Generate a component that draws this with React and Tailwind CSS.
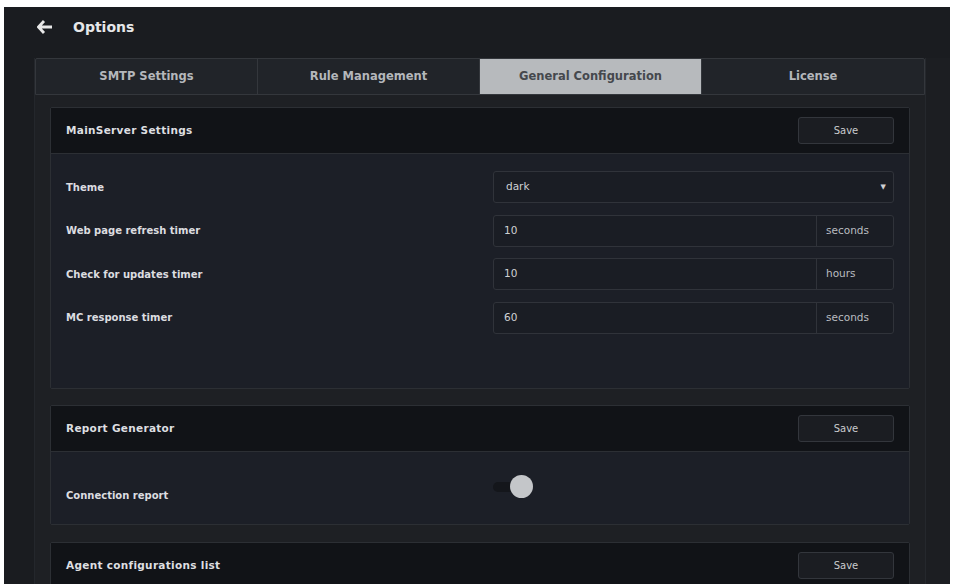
import React, { useState } from 'react';

const tabs = ['SMTP Settings', 'Rule Management', 'General Configuration', 'License'];

const SaveButton = () => (
  <button className="w-[96px] h-[27px] rounded-[3px] border border-[#33363c] bg-[#1b1d22] text-[10px] text-[#c9cbce]">
    Save
  </button>
);

const Card = ({ title, children, bodyClass = '' }) => (
  <div className="border border-[#2c2f34] rounded-[2px]">
    <div className="h-[46px] bg-[#111317] flex items-center justify-between pl-[15px] pr-[15px] border-b border-[#2c2f34]">
      <span className="text-[10.5px] font-bold tracking-[0.3px] text-[#dedfe1]">{title}</span>
      <SaveButton />
    </div>
    {children && <div className={`bg-[#1c1f27] px-[15px] ${bodyClass}`}>{children}</div>}
  </div>
);

const InputRow = ({ label, value, unit }) => (
  <div className="flex items-center h-[32px]">
    <span className="w-[427px] text-[10px] font-bold text-[#dcdde0]">{label}</span>
    <div className="flex-1 flex h-full border border-[#30333a] rounded-[3px] bg-[#1a1d24]">
      <span className="flex-1 flex items-center pl-[10px] text-[10.5px] text-[#cfd1d4] border-r border-[#30333a]">{value}</span>
      <span className="w-[76px] flex items-center pl-[9px] text-[10.5px] text-[#b9bcc0]">{unit}</span>
    </div>
  </div>
);

export default function App() {
  const [active, setActive] = useState(2);
  const [report, setReport] = useState(true);

  return (
    <div className="w-[953px] h-[587px] bg-white pt-[7px] pl-[4px] pr-[3px] pb-[3px] overflow-hidden" style={{ fontFamily: '"DejaVu Sans", "Liberation Sans", sans-serif' }}>
      <div className="h-full bg-[#1a1c20] flex flex-col overflow-hidden">
        {/* top bar */}
        <div className="h-[40px] shrink-0 flex items-center pl-[33px]">
          <svg width="16" height="14" viewBox="0 0 16 14" className="text-[#e8e8e8]">
            <path d="M7 1 L1.5 7 L7 13 M2 7 H15" fill="none" stroke="currentColor" strokeWidth="2.8" strokeLinejoin="miter" />
          </svg>
          <span className="ml-[20px] text-[14px] font-bold text-[#e6e7e9]">Options</span>
        </div>

        <div className="flex-1 flex pt-[11px]">
          <div className="w-[31px] shrink-0 border-r border-[#24272c]" />
          <div className="w-[890px] flex flex-col">
            {/* tabs */}
            <div className="h-[37px] shrink-0 grid grid-cols-4 border border-[#34373c] rounded-t-[2px] bg-[#212429]">
              {tabs.map((t, i) => (
                <button
                  key={t}
                  onClick={() => setActive(i)}
                  className={`text-[11.5px] font-bold ${i < 3 ? 'border-r border-[#34373c]' : ''} ${
                    active === i ? 'bg-[#b7babd] text-[#45484d]' : 'text-[#b4b7bb]'
                  }`}
                >
                  {t}
                </button>
              ))}
            </div>

            {/* panel */}
            <div className="flex-1 bg-[#1e2024] pt-[12px] px-[15px] flex flex-col gap-[17px]">
              <Card title="MainServer Settings" bodyClass="h-[234px] pt-[17px]">
                <div className="flex flex-col gap-[11.5px]">
                  <div className="flex items-center h-[32px]">
                    <span className="w-[427px] text-[10px] font-bold text-[#dcdde0]">Theme</span>
                    <div className="flex-1 h-full flex items-center justify-between border border-[#30333a] rounded-[3px] bg-[#1a1d24] pl-[12px] pr-[7px]">
                      <span className="text-[10.5px] text-[#cfd1d4]">dark</span>
                      <span className="text-[7px] text-[#cfd1d4]">▼</span>
                    </div>
                  </div>
                  <InputRow label="Web page refresh timer" value="10" unit="seconds" />
                  <InputRow label="Check for updates timer" value="10" unit="hours" />
                  <InputRow label="MC response timer" value="60" unit="seconds" />
                </div>
              </Card>

              <div className="-mt-[1px]">
                <Card title="Report Generator" bodyClass="h-[72px] flex items-center">
                  <span className="w-[427px] text-[10px] font-bold text-[#dcdde0] pt-[14px]">Connection report</span>
                  <button
                    onClick={() => setReport(!report)}
                    className="relative w-[44px] h-[24px] -mt-[3px]"
                  >
                    <span className="absolute left-[0px] top-[7px] w-[30px] h-[10px] rounded-full bg-[#14161b]" />
                    <span
                      className={`absolute top-0 w-[23px] h-[23px] rounded-full bg-[#c4c6c9] ${report ? 'left-[17px]' : 'left-0'}`}
                    />
                  </button>
                </Card>
              </div>

              <div>
                <Card title="Agent configurations list" />
              </div>
            </div>
          </div>
          <div className="flex-1 border-l border-[#25282d] bg-[#1c1e22]" />
        </div>
      </div>
    </div>
  );
}
